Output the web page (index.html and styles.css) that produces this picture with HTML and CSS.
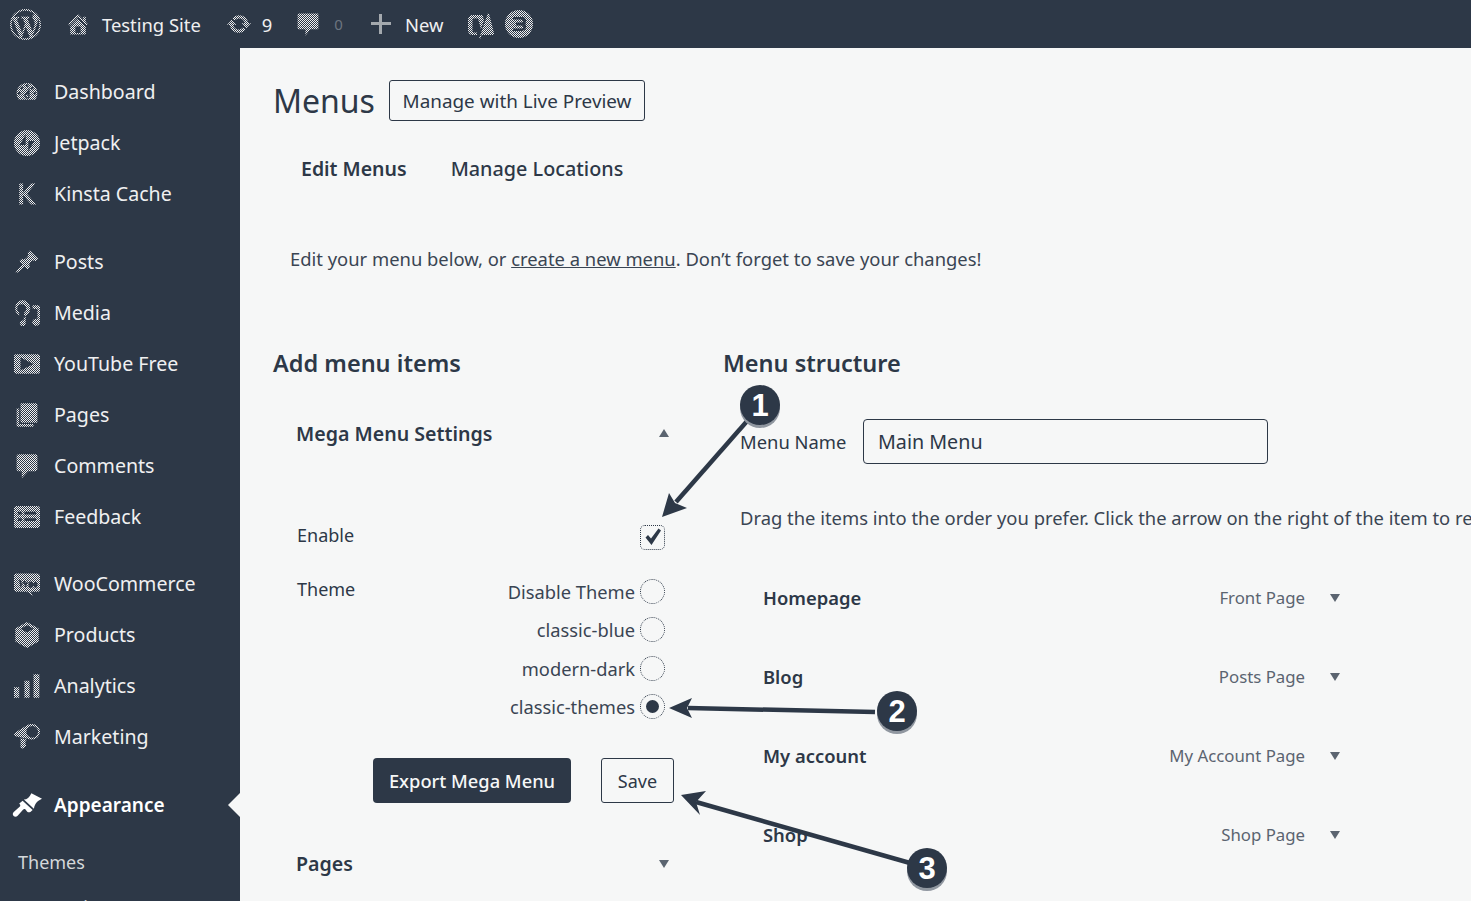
FILE: index.html
```html
<!DOCTYPE html>
<html lang="en">
<head>
<meta charset="utf-8">
<title>Menus</title>
<link rel="stylesheet" href="styles.css">
</head>
<body>
<svg class="defs" width="0" height="0">
  <defs>
    <pattern id="d26" patternUnits="userSpaceOnUse" width="1.53846" height="1.53846">
      <rect width="0.76923" height="0.76923" fill="#f0f0f1"/>
      <rect x="0.76923" y="0.76923" width="0.76923" height="0.76923" fill="#f0f0f1"/>
    </pattern>
    <pattern id="d31" patternUnits="userSpaceOnUse" width="1.29032" height="1.29032">
      <rect width="0.64516" height="0.64516" fill="#f0f0f1"/>
      <rect x="0.64516" y="0.64516" width="0.64516" height="0.64516" fill="#f0f0f1"/>
    </pattern>
    <pattern id="d1" patternUnits="userSpaceOnUse" width="2" height="2">
      <rect width="1" height="1" fill="#f0f0f1"/>
      <rect x="1" y="1" width="1" height="1" fill="#f0f0f1"/>
    </pattern>
  </defs>
</svg>
<header class="adminbar">
  <svg class="ab-wp" viewBox="0 0 20 20"><path d="M20 10c0-5.510-4.490-10-10-10C4.480 0 0 4.490 0 10c0 5.520 4.480 10 10 10 5.510 0 10-4.480 10-10zM7.780 15.370L4.370 6.220c.550-.020 1.170-.080 1.170-.080.500-.060.440-1.130-.060-1.110 0 0-1.450.110-2.370.110-.180 0-.370 0-.580-.010C4.120 2.690 6.870 1.110 10 1.110c2.330 0 4.450.870 6.050 2.340-.680-.110-1.650.390-1.650 1.580 0 .740.450 1.360.900 2.100.350.610.550 1.360.550 2.460 0 1.490-1.400 5-1.400 5l-3.030-8.370c.540-.020.820-.170.820-.170.500-.050.440-1.250-.060-1.220 0 0-1.440.120-2.380.120-.870 0-2.330-.120-2.330-.120-.500-.030-.560 1.200-.060 1.220l.920.080 1.260 3.410zM17.410 10c.240-.640.740-1.870.430-4.250.700 1.290 1.050 2.710 1.050 4.250 0 3.290-1.730 6.240-4.400 7.780.970-2.590 1.940-5.200 2.920-7.780zM6.100 18.090C3.120 16.650 1.110 13.530 1.110 10c0-1.300.230-2.480.720-3.590C3.250 10.300 4.670 14.200 6.100 18.090zm4.030-6.630l2.580 6.980c-.860.290-1.760.450-2.710.450-.790 0-1.570-.110-2.290-.330.810-2.380 1.620-4.740 2.420-7.100z"/></svg>
  <svg class="ab-home" viewBox="0 0 20 20"><path d="M16 8.500l1.530 1.530-1.060 1.060L10 4.620l-6.470 6.470-1.060-1.060L10 2.500l4 4v-2h2v4zm-6-2.460l6 5.990V18H4v-5.970zM12 17v-5H8v5h4z"/></svg>
  <span class="ab-site">Testing Site</span>
  <svg class="ab-update" viewBox="0 0 20 20"><path d="M10.200 3.280c3.530 0 6.430 2.610 6.920 6h2.080l-3.500 4-3.500-4h2.320c-.450-1.970-2.210-3.450-4.320-3.450-1.450 0-2.730.710-3.540 1.780L4.950 5.660C6.230 4.200 8.110 3.280 10.200 3.280zm-.400 13.440c-3.520 0-6.430-2.610-6.920-6H.800l3.500-4c1.170 1.330 2.330 2.670 3.500 4H5.480c.450 1.970 2.210 3.450 4.320 3.450 1.450 0 2.730-.710 3.540-1.780l1.710 1.950c-1.280 1.460-3.150 2.380-5.250 2.380z"/></svg>
  <span class="ab-count">9</span>
  <svg class="ab-comment" viewBox="0 0 20 20"><path d="M3 2h14c.600 0 1 .400 1 1v10c0 .600-.400 1-1 1h-5l-4 5v-5H3c-.600 0-1-.400-1-1V3c0-.600.400-1 1-1z"/></svg>
  <span class="ab-zero">0</span>
  <svg class="ab-plus" viewBox="0 0 20 20"><path d="M8 0h3v8h9v3h-9v9H8v-9H0V8h8z"/></svg>
  <span class="ab-new">New</span>
  <svg class="ab-yoast" viewBox="0 0 28 30"><path d="M6 6h8c1 0 1.500 .5 2 1.500l1 4-3 9-3-11H6.500C6 8.500 5.500 10 5.500 12v9c0 1.500 .5 2.500 2 2.500H10V26H6c-3 0-5-2-5-5V11c0-3 2-5 5-5zM21 4c.500 0 1 .500 1.200 1.200L27 24c0 1.500-.500 2-1.500 2H14.500l-1 3.500H12zM17 0h1v1h-1z"/></svg>
  <svg class="ab-avatar" viewBox="0 0 28 28"><path fill-rule="evenodd" d="M14 0a14 14 0 1 1 0 28a14 14 0 0 1 0-28zM8 7v2.500h8.500a1.500 1.500 0 0 1 0 3H11v3h5.800a1.500 1.500 0 0 1 0 3H8V21h9a4.500 4.500 0 0 0 3-7.500A3.800 3.800 0 0 0 17 7z"/></svg>
</header>

<div class="layout">
  <nav class="sidebar">
    <ul class="menu-group">
      <li class="menu-item"><svg class="mi" viewBox="0 0 20 20"><path d="M3.760 16h12.480c1.100-1.370 1.760-3.110 1.760-5 0-4.420-3.580-8-8-8s-8 3.580-8 8c0 1.890.660 3.630 1.760 5zM10 4c.550 0 1 .450 1 1s-.450 1-1 1-1-.450-1-1 .450-1 1-1zM6 6c.550 0 1 .450 1 1s-.450 1-1 1-1-.450-1-1 .450-1 1-1zm8 0c.550 0 1 .450 1 1s-.450 1-1 1-1-.450-1-1 .450-1 1-1zm-5.370 5.550L12 7v6c0 1.100-.900 2-2 2s-2-.900-2-2c0-.570.240-1.080.630-1.450zM4 10c.550 0 1 .450 1 1s-.450 1-1 1-1-.450-1-1 .450-1 1-1zm12 0c.550 0 1 .450 1 1s-.450 1-1 1-1-.450-1-1 .450-1 1-1zm-5 3c0-.550-.450-1-1-1s-1 .450-1 1 .450 1 1 1 1-.450 1-1z"/></svg>Dashboard</li>
      <li class="menu-item"><svg class="mi" viewBox="0 0 20 20"><path fill-rule="evenodd" d="M10 0a10 10 0 1 1 0 20a10 10 0 0 1 0-20zM9 3.500L4.500 11.500H9zM11 8.500v8l4.500-8z"/></svg>Jetpack</li>
      <li class="menu-item"><svg class="mi mi-k" viewBox="0 0 20 20"><path d="M4 2h3v7l6-7h3.500l-6.500 7.800L17 18h-3.800L7 10.800V18H4z"/></svg>Kinsta Cache</li>
    </ul>
    <ul class="menu-group menu-group-tight">
      <li class="menu-item"><svg class="mi" viewBox="0 0 20 20"><path d="M10.440 3.020l1.820-1.820 6.360 6.350-1.830 1.820c-1.050-.680-2.480-.570-3.410.360l-.750.750c-.920.930-1.040 2.350-.350 3.410l-1.830 1.820-2.410-2.410-2.800 2.790c-.420.420-3.380 2.710-3.800 2.290s1.860-3.390 2.280-3.810l2.790-2.790L4.100 9.360l1.830-1.820c1.050.690 2.480.570 3.400-.360l.750-.750c.930-.920 1.050-2.350.360-3.410z"/></svg>Posts</li>
      <li class="menu-item"><svg class="mi" viewBox="0 0 20 20"><path fill-rule="evenodd" d="M6 0a6.500 6.500 0 0 1 6.500 6.500c0 2.500-1.500 4.800-3.800 5.800l-1-.900V9.800a3.500 3.500 0 1 0-3.700-.100v2.200A6.500 6.500 0 0 1 6 0zM14 4h4.500c.800 0 1.500.700 1.500 1.500V17c0 1.700-1.300 3-3 3s-3-1.300-3-2.800c0-1.500 1.300-2.700 3.200-2.700l.8.100V7h-3.500zM7.500 13.500l1.500-1v5.300c0 1.200-.900 2.200-2.200 2.200S4.500 19 4.500 17.800s1-2.300 3-2.300z"/></svg>Media</li>
      <li class="menu-item"><svg class="mi" viewBox="0 0 20 20"><path fill-rule="evenodd" d="M1.500 2.500h17c.800 0 1.500.700 1.500 1.500v12c0 .800-.700 1.500-1.500 1.500h-17C.700 17.500 0 16.800 0 16V4c0-.800.700-1.500 1.500-1.500zM5 5v10l10-5z"/></svg>YouTube Free</li>
      <li class="menu-item"><svg class="mi" viewBox="0 0 20 20"><path d="M6 1h11c.500 0 1 .500 1 1v13c0 .500-.500 1-1 1H6c-.500 0-1-.500-1-1V2c0-.500.500-1 1-1zM2 5h2v12h11v2H3c-.600 0-1-.400-1-1z"/></svg>Pages</li>
      <li class="menu-item"><svg class="mi" viewBox="0 0 20 20"><path d="M3.500 1h13c.800 0 1.500.700 1.500 1.500v10c0 .800-.700 1.500-1.500 1.500H11l-5 5.500V14H3.500C2.700 14 2 13.300 2 12.500v-10C2 1.700 2.700 1 3.500 1z"/></svg>Comments</li>
      <li class="menu-item"><svg class="mi" viewBox="0 0 20 20"><path fill-rule="evenodd" d="M2 1.500h16c1.100 0 2 .900 2 2v13c0 1.100-.900 2-2 2H2c-1.100 0-2-.900-2-2v-13c0-1.100.900-2 2-2zM3 6v2h3V6zM8 6v2h9V6zM3 11v2h3v-2zM8 11v2h9v-2z"/></svg>Feedback</li>
    </ul>
    <ul class="menu-group">
      <li class="menu-item"><svg class="mi mi-woo" viewBox="0 0 20 20"><path fill-rule="evenodd" d="M2 2h16c1.100 0 2 .900 2 2v10c0 1.100-.900 2-2 2h-5l1.500 3-4.500-3H2c-1.100 0-2-.900-2-2V4c0-1.100.900-2 2-2zM4 7l1 6 2.500-4L9 13l2-6-2 2-.800-2L6 10.500 5.500 7zM13 8a2 2.500 0 1 0 .100 0zM16.500 8a1.500 2.500 0 1 0 .100 0z"/></svg>WooCommerce</li>
      <li class="menu-item"><svg class="mi" viewBox="0 0 20 20"><path d="M10 0l9 5v10l-9 5-9-5V5zM10 2.500L5 5.200 10 8l5-2.800z"/></svg>Products</li>
      <li class="menu-item"><svg class="mi" viewBox="0 0 20 20"><path d="M0 11h4v8H0zM8 6h4v13H8zM15 1h4.500v18H15z"/></svg>Analytics</li>
      <li class="menu-item"><svg class="mi" viewBox="0 0 20 20"><path fill-rule="evenodd" d="M14 0a6 6 0 1 1 0 12l-1-.100L1 9.500 0 8l1-1.500L10 1a6 6 0 0 1 4-1zM14 1.500a4.500 4.500 0 1 0 0 9a4.500 4.500 0 0 0 0-9zM5 11l5 1-1.500 2 1 2.500L7 19l-2-1z"/></svg>Marketing</li>
    </ul>
    <ul class="menu-group">
      <li class="menu-item is-current"><svg class="mi" viewBox="0 0 24 20"><path d="M15.500 0.500L24 5c-3 1.500-5.500 3-6.500 8l-8-7.500c2.500 0 4.500-1.500 6-5zM8.500 6.500l8 7.500-1.800 1.500c-.800.600-1.800.500-2.500-.200L10.800 13.500c-.600-.600-1.400-.500-2 .200L4.500 18.500c-.900 1-2.300 1.100-3.200.200-.900-.900-.900-2.200.100-3.100l4.700-4.300c.700-.600.700-1.400.100-2l-.400-.500z"/></svg>Appearance</li>
    </ul>
    <ul class="submenu">
      <li class="submenu-item">Themes</li>
      <li class="submenu-item">Customize</li>
    </ul>
  </nav>

  <main class="content">
    <div class="title-row">
      <h1 class="title">Menus</h1>
      <a class="btn-outline btn-preview">Manage with Live Preview</a>
    </div>
    <div class="tabs">
      <a class="tab tab-active">Edit Menus</a>
      <a class="tab">Manage Locations</a>
    </div>
    <p class="intro">Edit your menu below, or <a class="link">create a new menu</a>. Don’t forget to save your changes!</p>

    <div class="columns">
      <section class="col-left">
        <h2 class="col-title">Add menu items</h2>
        <div class="panel-head panel-head-first">
          <h3 class="panel-title">Mega Menu Settings</h3>
          <i class="tri tri-up"></i>
        </div>
        <div class="field field-enable">
          <span class="enable-label">Enable</span>
          <span class="check"><svg viewBox="0 0 20 20"><path d="M2.500 10.500l2.500-2.500 3 3.500L15.500 1.500l2.500 2-9.500 14.500z"/></svg></span>
        </div>
        <div class="field-theme">
          <span class="theme-label">Theme</span>
          <div class="radios">
            <label class="radio-row">Disable Theme<span class="radio"></span></label>
            <label class="radio-row">classic-blue<span class="radio"></span></label>
            <label class="radio-row">modern-dark<span class="radio"></span></label>
            <label class="radio-row">classic-themes<span class="radio radio-on"></span></label>
          </div>
        </div>
        <div class="actions">
          <a class="btn-solid">Export Mega Menu</a>
          <a class="btn-outline btn-save">Save</a>
        </div>
        <div class="panel-head panel-head-pages">
          <h3 class="panel-title">Pages</h3>
          <i class="tri tri-down"></i>
        </div>
      </section>

      <section class="col-right">
        <h2 class="col-title">Menu structure</h2>
        <div class="name-row">
          <label class="name-label">Menu Name</label>
          <div class="name-input">Main Menu</div>
        </div>
        <p class="drag-text">Drag the items into the order you prefer. Click the arrow on the right of the item to reveal additional configuration options.</p>
        <ul class="items">
          <li class="item"><strong>Homepage</strong><span class="item-type">Front Page</span><i class="tri tri-down"></i></li>
          <li class="item"><strong>Blog</strong><span class="item-type">Posts Page</span><i class="tri tri-down"></i></li>
          <li class="item"><strong>My account</strong><span class="item-type">My Account Page</span><i class="tri tri-down"></i></li>
          <li class="item"><strong>Shop</strong><span class="item-type">Shop Page</span><i class="tri tri-down"></i></li>
        </ul>
      </section>
    </div>
  </main>
</div>

<svg class="annotations" viewBox="0 0 1471 901">
  <g class="arrow">
    <line x1="748" y1="420" x2="676" y2="502"/>
    <polygon points="662,517 669,493 675,503 687,508"/>
    <line x1="875" y1="712" x2="688" y2="708"/>
    <polygon points="669,708 692,698 687,708 692,718"/>
    <line x1="910" y1="863" x2="696" y2="802"/>
    <polygon points="681,795 706,791 696,802 700,815"/>
  </g>
  <g class="badge-shadow">
    <circle cx="760" cy="408" r="20"/>
    <circle cx="897" cy="714" r="20"/>
    <circle cx="927" cy="871" r="20"/>
  </g>
  <g class="badge">
    <circle cx="760" cy="405" r="20"/>
    <circle cx="897" cy="711" r="20"/>
    <circle cx="927" cy="868" r="20"/>
  </g>
  <g class="badge-num">
    <text x="760" y="416">1</text>
    <text x="897" y="722">2</text>
    <text x="927" y="879">3</text>
  </g>
</svg>
</body>
</html>
```

FILE: styles.css
```css
* { box-sizing: border-box; }
html, body { margin: 0; height: 901px; overflow: hidden; }
body {
  position: relative;
  background: #f6f7f7;
  color: #2d3847;
  font-family: "Noto Sans", "Open Sans", sans-serif;
  font-size: 18px;
}
ul { list-style: none; margin: 0; padding: 0; }
h1, h2, h3, p { margin: 0; }
.defs { position: absolute; }

.adminbar {
  height: 48px;
  background: #2d3847;
  color: #f0f0f1;
  display: flex;
  align-items: center;
  padding-left: 10px;
  font-size: 18.400px;
}
.adminbar svg { fill: url(#d26); flex: none; display: block; }
.adminbar .ab-wp { width: 31px; height: 31px; fill: url(#d31); }
.ab-home { width: 26px; height: 26px; margin-left: 24px; }
.ab-site { margin-left: 11px; }
.ab-update { width: 26px; height: 26px; margin-left: 25px; }
.ab-count { margin-left: 10px; }
.ab-comment { width: 26px; height: 26px; margin-left: 23px; }
.ab-zero { margin-left: 13px; color: #6c7580; font-size: 15px; }
.adminbar .ab-plus { width: 20px; height: 20px; margin-left: 28px; fill: #a4a9ae; }
.ab-new { margin-left: 14px; }
.adminbar .ab-yoast { width: 28px; height: 30px; margin-left: 24px; fill: url(#d1); }
.adminbar .ab-avatar { width: 28px; height: 28px; margin-left: 10px; fill: url(#d1); }

.layout { display: flex; height: 853px; }
.sidebar {
  width: 240px;
  flex: none;
  background: #2d3847;
  color: #f0f0f1;
  padding-top: 18px;
  overflow: hidden;
}
.menu-group { margin-bottom: 17px; }
.menu-group-tight { margin-bottom: 16px; }
.menu-item {
  position: relative;
  height: 51px;
  display: flex;
  align-items: center;
  padding-left: 14px;
  gap: 14px;
  font-size: 19.600px;
  white-space: nowrap;
}
.mi { width: 26px; height: 26px; fill: url(#d26); flex: none; }
.mi-woo { width: 30px; margin-left: -2px; margin-right: -2px; }
.is-current { font-weight: 600; color: #fff; font-size: 19px; }
.is-current .mi { fill: #fff; width: 30px; margin-left: -2px; margin-right: -2px; }
.is-current::after {
  content: "";
  position: absolute;
  right: 0;
  top: 14px;
  border: 12px solid transparent;
  border-left-width: 0;
  border-right-color: #f6f7f7;
}
.submenu { margin-top: -8px; padding-left: 18px; font-size: 18px; color: #d4d7da; }
.submenu-item { height: 45px; display: flex; align-items: center; }

.content { flex: 1; min-width: 0; overflow: hidden; padding-left: 33px; }
.title-row { display: flex; align-items: center; height: 41px; margin-top: 32px; }
.title { font-size: 32px; font-weight: 400; line-height: 41px; width: 116px; }
.btn-outline {
  display: flex;
  align-items: center;
  justify-content: center;
  border: 1px solid #2d3847;
  border-radius: 3px;
  white-space: nowrap;
}
.btn-preview { width: 256px; height: 41px; font-size: 18.900px; }
.tabs { display: flex; height: 42px; margin-top: 26px; padding-left: 28px; gap: 44px; align-items: center; font-size: 19.800px; }
.tab { font-weight: 500; }
.tab-active { font-weight: 600; font-size: 19.500px; }
.intro { margin-top: 55px; padding-left: 17px; font-size: 18.400px; line-height: 30px; color: #3a4553; }
.link { text-decoration: underline; }

.columns { display: grid; grid-template-columns: 450px 1fr; margin-top: 73px; }
.col-title { font-size: 23.500px; font-weight: 600; line-height: 32px; white-space: nowrap; }
.panel-head { display: flex; align-items: center; justify-content: space-between; height: 30px; padding-left: 23px; width: 396px; }
.panel-head-first { margin-top: 39px; }
.panel-title { font-size: 19.600px; font-weight: 600; }
.field { display: flex; align-items: center; justify-content: space-between; }
.field-enable { margin-top: 76px; padding-left: 24px; width: 392px; height: 26px; font-size: 18px; }
.enable-label { margin-top: -4px; }
.check { width: 25px; height: 25px; border: 1px dotted #2d3847; border-radius: 5px; display: flex; align-items: center; justify-content: center; }
.check svg { width: 20px; height: 20px; fill: #2d3847; }
.field-theme { display: flex; justify-content: space-between; width: 392px; margin-top: 29px; padding-left: 24px; font-size: 18.300px; }
.theme-label { line-height: 24px; margin-top: -2px; font-size: 18px; }
.radios { display: flex; flex-direction: column; gap: 14.500px; }
.radio-row { display: flex; align-items: center; justify-content: flex-end; gap: 5px; height: 24px; color: #3a4553; }
.radio { width: 25px; height: 25px; border: 1px dotted #2d3847; border-radius: 50%; display: flex; align-items: center; justify-content: center; flex: none; }
.radio-on::before { content: ""; width: 13px; height: 13px; border-radius: 50%; background: #2d3847; }
.actions { display: flex; gap: 30px; margin-top: 39px; padding-left: 100px; }
.btn-solid { width: 198px; height: 45px; background: #2d3847; color: #f6f7f7; border-radius: 4px; display: flex; align-items: center; justify-content: center; font-size: 18.300px; font-weight: 500; white-space: nowrap; padding-top: 1px; }
.btn-save { width: 73px; height: 45px; font-size: 18px; padding-top: 2px; }
.panel-head-pages { margin-top: 46px; }

.tri { display: block; width: 0; height: 0; border-left: 5px solid transparent; border-right: 5px solid transparent; flex: none; }
.tri-up { border-bottom: 8px solid #5b6470; }
.tri-down { border-top: 8px solid #5b6470; }

.name-row { display: flex; align-items: center; margin-top: 40px; padding-left: 17px; }
.name-label { width: 123px; font-size: 18.400px; white-space: nowrap; }
.name-input { width: 405px; height: 45px; border: 1px solid #2d3847; border-radius: 4px; display: flex; align-items: center; padding-left: 14px; font-size: 19.700px; }
.drag-text { margin-top: 39px; padding-left: 17px; font-size: 18.400px; line-height: 30px; white-space: nowrap; color: #3a4553; }
.items { margin-top: 25px; padding-left: 40px; }
.item { display: flex; align-items: center; height: 79px; width: 577px; font-size: 18.400px; }
.item strong { font-weight: 600; }
.item-type { margin-left: auto; font-size: 16.800px; color: #5b6470; }
.item .tri { margin-left: 25px; }

.annotations { position: absolute; left: 0; top: 0; width: 1471px; height: 901px; pointer-events: none; }
.arrow line { stroke: #2d3847; stroke-width: 4.500; }
.arrow polygon { fill: #2d3847; }
.badge circle { fill: #2d3847; }
.badge-shadow circle { fill: #9097a0; }
.badge-num text { fill: #fff; font-family: "Liberation Sans", sans-serif; font-size: 31px; font-weight: 700; text-anchor: middle; }
```
